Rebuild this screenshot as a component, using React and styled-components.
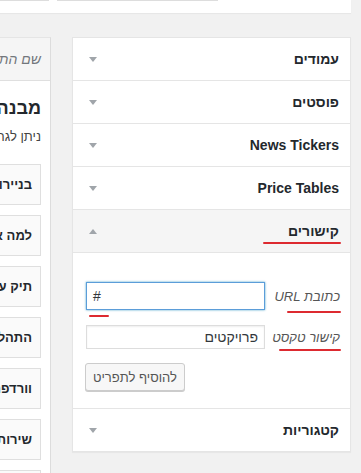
import React from 'react'
import styled, { createGlobalStyle } from 'styled-components'

const GlobalStyle = createGlobalStyle`
  body {
    margin: 0;
    background: #f1f1f1;
    font-family: "Liberation Sans", Arial, sans-serif;
  }
`

const Page = styled.div`
  direction: rtl;
  width: 361px;
  height: 473px;
  overflow: hidden;
`

const TopBar = styled.div`
  width: 351px;
  height: 13px;
  margin-right: 10px;
  padding-right: 133px;
  box-sizing: border-box;
  background: #fff;
  box-shadow: 0 1px 1px rgba(0, 0, 0, 0.04);
  display: flex;
  gap: 8px;
  overflow: hidden;
`

const TopInput = styled.div`
  flex: none;
  width: ${p => p.w}px;
  height: 28px;
  margin-top: -27px;
  border: 1px solid #ddd;
  box-sizing: border-box;
  background: #fff;
`

const Main = styled.div`
  display: flex;
  align-items: flex-start;
  gap: 21px;
  margin-top: 24px;
  padding-right: 10px;
`

const Accordion = styled.div`
  flex: none;
  width: 279px;
  box-sizing: border-box;
  background: #fff;
  border: 1px solid #e5e5e5;
  box-shadow: 0 1px 1px rgba(0, 0, 0, 0.04);
`

const Section = styled.div`
  border-bottom: 1px solid #e5e5e5;
  &:last-child {
    border-bottom: 0;
  }
`

const Header = styled.div`
  position: relative;
  height: 42px;
  display: flex;
  align-items: center;
  justify-content: space-between;
  padding: 0 11px 0 16px;
  background: ${p => (p.open ? '#f5f5f5' : '#fff')};
  border-bottom: ${p => (p.open ? '1px solid #e5e5e5' : '0')};
  font-size: 14px;
  font-weight: bold;
  color: #23282d;
`

const Arrow = styled.span`
  width: 0;
  height: 0;
  border-left: 4px solid transparent;
  border-right: 4px solid transparent;
  border-top: ${p => (p.up ? '0' : '5px solid #a0a5aa')};
  border-bottom: ${p => (p.up ? '5px solid #a0a5aa' : '0')};
`

const Content = styled.div`
  position: relative;
  padding: 29px 10px 17px 13px;
  display: flex;
  flex-direction: column;
`

const Row = styled.div`
  display: flex;
  align-items: center;
  justify-content: space-between;
  margin-bottom: ${p => p.mb}px;
`

const Label = styled.span`
  font-size: 13px;
  font-style: italic;
  color: #555;
`

const Input = styled.div`
  width: 179px;
  height: ${p => p.h}px;
  box-sizing: border-box;
  border: 1px solid ${p => (p.focus ? '#5b9dd9' : '#ddd')};
  box-shadow: ${p => (p.focus ? '0 0 2px rgba(30, 140, 190, 0.8)' : 'inset 0 1px 2px rgba(0, 0, 0, 0.07)')};
  background: #fff;
  display: flex;
  align-items: center;
  padding: 0 6px;
  direction: ${p => (p.ltr ? 'ltr' : 'rtl')};
  font-size: 14px;
  color: #32373c;
`

const Button = styled.div`
  align-self: flex-end;
  height: 28px;
  padding: 0 7px;
  margin-left: -1px;
  box-sizing: border-box;
  border: 1px solid #ccc;
  border-radius: 3px;
  background: #f7f7f7;
  box-shadow: 0 1px 0 #ccc;
  display: flex;
  align-items: center;
  font-size: 13px;
  color: #555;
`

const Mark = styled.span`
  position: absolute;
  top: ${p => p.top}px;
  ${p => (p.left !== undefined ? `left: ${p.left}px;` : `right: ${p.right}px;`)}
  width: ${p => p.w}px;
  height: 2px;
  background: #dd2a30;
  border-radius: 1px;
`

const Sidebar = styled.div`
  flex: none;
  width: 51px;
  height: 440px;
  box-sizing: border-box;
  overflow: hidden;
  background: #fff;
  border-top: 1px solid #e5e5e5;
  border-right: 1px solid #dcdcdc;
  white-space: nowrap;
`

const SideHead = styled.div`
  height: 42px;
  display: flex;
  align-items: center;
  padding-right: 9px;
  background: #f5f5f5;
  border-bottom: 1px solid #dfdfdf;
  font-size: 14px;
  font-style: italic;
  color: #72777c;
`

const SideBody = styled.div`
  padding-right: 9px;
`

const SideTitle = styled.h3`
  margin: 15px 0 6px;
  font-size: 18px;
  line-height: 25px;
  font-weight: bold;
  color: #23282d;
`

const SideNote = styled.p`
  margin: 0 0 18px;
  font-size: 13px;
  line-height: 19px;
  color: #444;
`

const MenuItem = styled.div`
  width: 250px;
  height: 41px;
  box-sizing: border-box;
  margin-bottom: 10px;
  padding-right: 8px;
  border: 1px solid #dfdfdf;
  background: #fafafa;
  display: flex;
  align-items: center;
  font-size: 13px;
  font-weight: bold;
  color: #23282d;
`

const sections = ['עמודים', 'פוסטים', 'News Tickers', 'Price Tables']
const menuItems = ['בניירות ערך', 'למה אנחנו', 'תיק עבודות', 'התהליך', 'וורדפרס', 'שירותים', 'צור קשר']

const App = () => (
  <Page>
    <GlobalStyle />
    <TopBar>
      <TopInput w={161} />
      <TopInput w={200} />
    </TopBar>
    <Main>
      <Accordion>
        {sections.map(title => (
          <Section key={title}>
            <Header>
              <span>{title}</span>
              <Arrow />
            </Header>
          </Section>
        ))}
        <Section>
          <Header open>
            <span>קישורים</span>
            <Arrow up />
            <Mark top={32} right={9} w={78} />
          </Header>
          <Content>
            <Row mb={15}>
              <Label>כתובת URL</Label>
              <Input h={28} focus ltr>#</Input>
            </Row>
            <Row mb={14}>
              <Label>קישור טקסט</Label>
              <Input h={24}>פרויקטים</Input>
            </Row>
            <Button>להוסיף לתפריט</Button>
            <Mark top={58} right={9} w={54} />
            <Mark top={62} left={16} w={20} />
            <Mark top={96} right={9} w={62} />
          </Content>
        </Section>
        <Section>
          <Header>
            <span>קטגוריות</span>
            <Arrow />
          </Header>
        </Section>
      </Accordion>
      <Sidebar>
        <SideHead>שם התפריט</SideHead>
        <SideBody>
          <SideTitle>מבנה התפריט</SideTitle>
          <SideNote>ניתן לגרור כל פריט לסדר הרצוי.</SideNote>
          {menuItems.map(item => (
            <MenuItem key={item}>{item}</MenuItem>
          ))}
        </SideBody>
      </Sidebar>
    </Main>
  </Page>
)

export default App
